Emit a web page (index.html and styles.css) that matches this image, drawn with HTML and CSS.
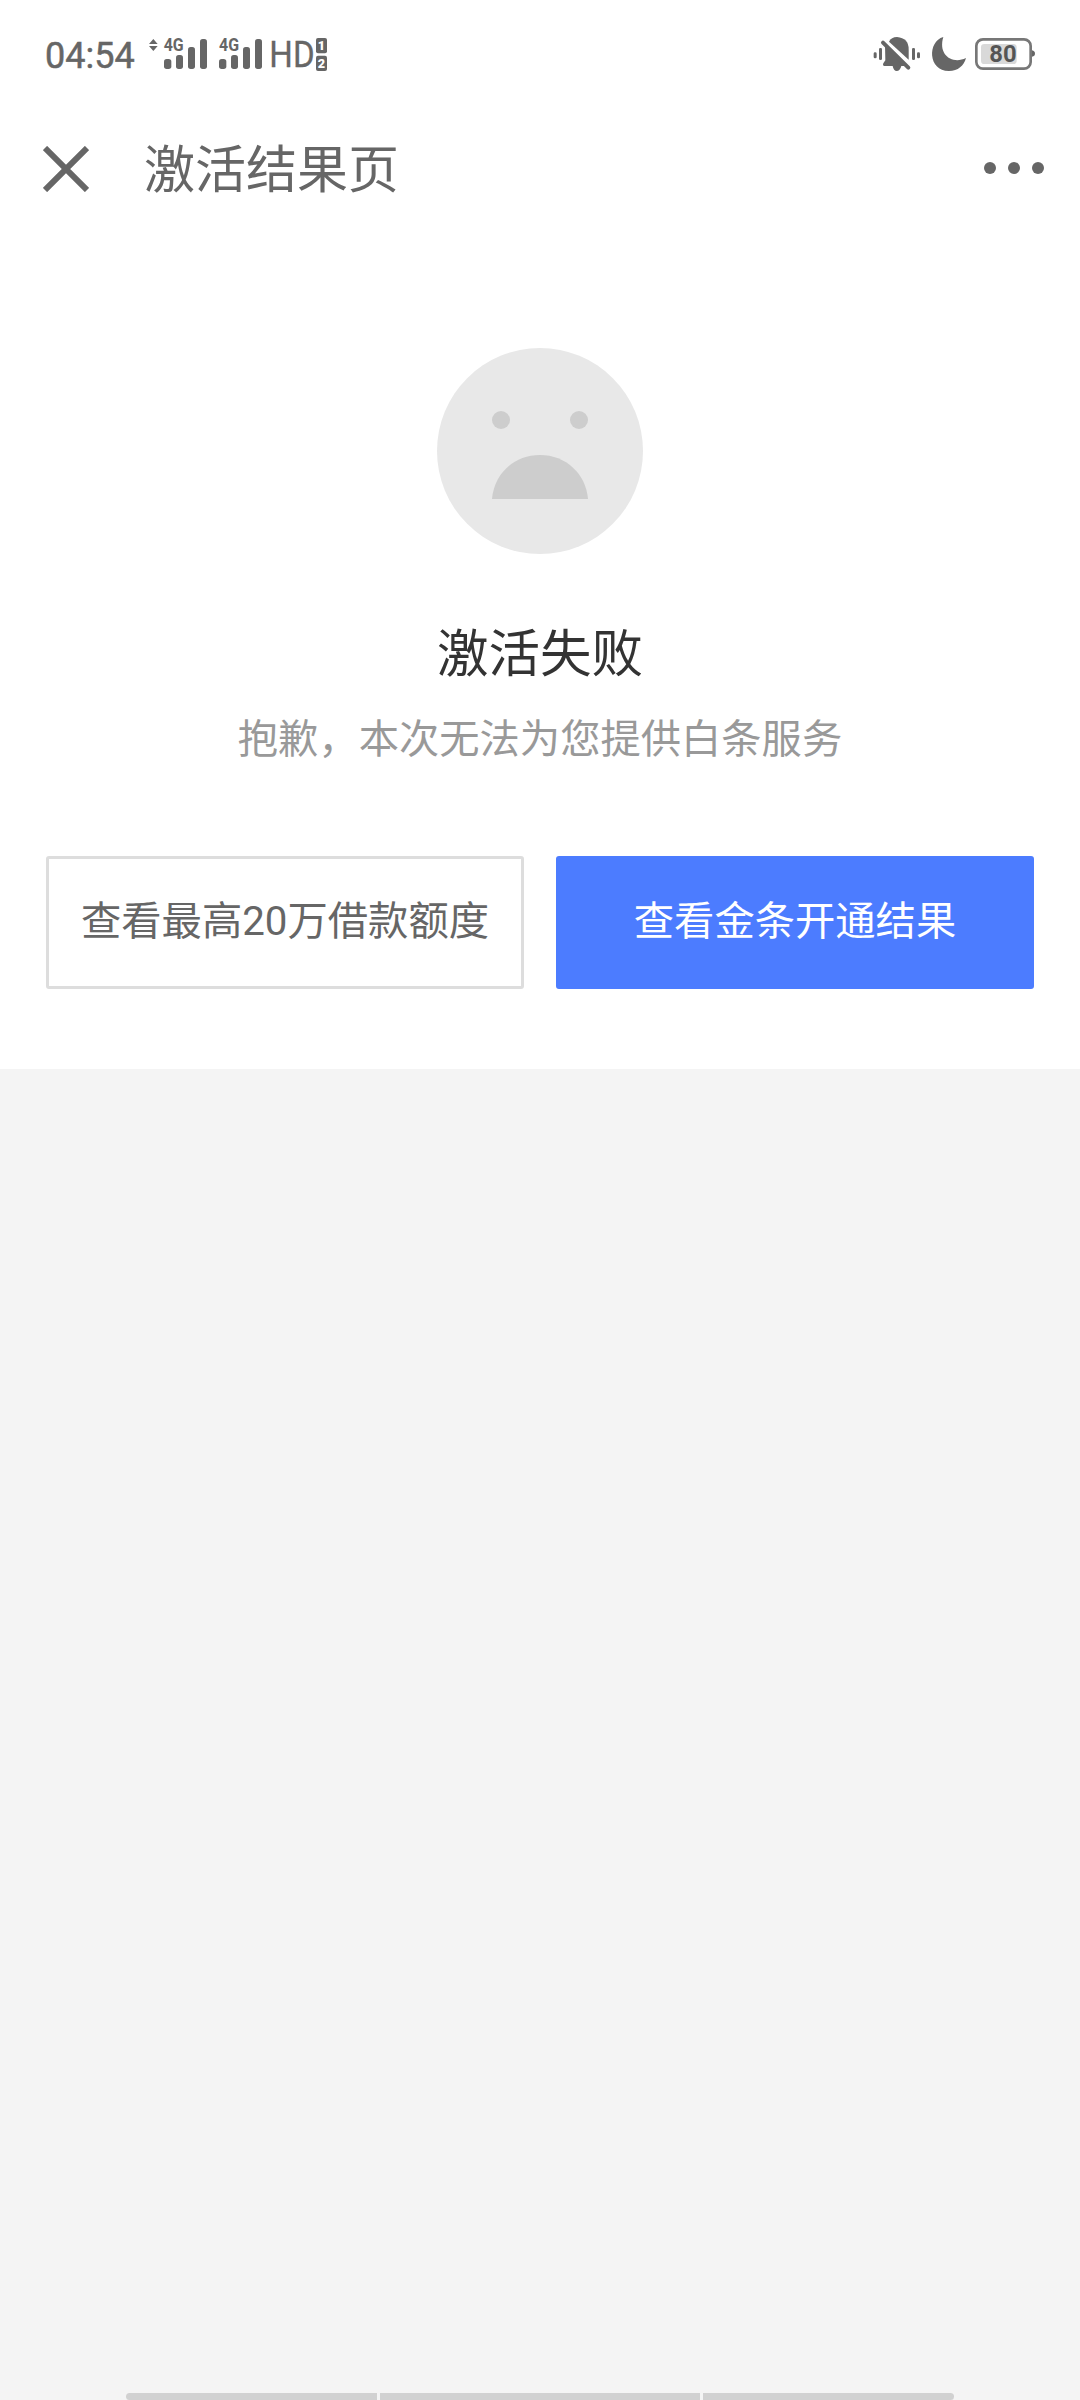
FILE: index.html
```html
<!DOCTYPE html>
<html lang="zh-CN">
<head>
<meta charset="UTF-8">
<meta name="viewport" content="width=device-width, initial-scale=1.0">
<title>激活结果页</title>
<link rel="stylesheet" href="styles.css">
</head>
<body>

<div class="status-bar">
  <span class="clock">04:54</span>
  <svg class="signals" viewBox="351 30 549 147">
    <path d="M357 72L370 57L383 72ZM357 78L370 93L383 78Z"/>
    <text class="net" x="401" y="94" textLength="60" lengthAdjust="spacingAndGlyphs">4G</text>
    <rect x="402" y="117" width="22" height="30" rx="8"/>
    <rect x="438" y="105" width="21" height="42" rx="8"/>
    <rect x="474" y="81" width="21" height="66" rx="8"/>
    <rect x="510" y="57" width="21" height="90" rx="8"/>
    <text class="net" x="567" y="94" textLength="60" lengthAdjust="spacingAndGlyphs">4G</text>
    <rect x="567" y="117" width="22" height="30" rx="8"/>
    <rect x="603" y="105" width="21" height="42" rx="8"/>
    <rect x="639" y="81" width="21" height="66" rx="8"/>
    <rect x="675" y="57" width="21" height="90" rx="8"/>
    <text class="hd" x="718" y="141" textLength="136" lengthAdjust="spacingAndGlyphs">HD</text>
    <rect x="858" y="54" width="33" height="46" rx="6"/>
    <rect x="858" y="107" width="33" height="46" rx="6"/>
    <text class="sim" x="874" y="91">1</text>
    <text class="sim" x="874" y="144">2</text>
  </svg>
  <svg class="indicators" viewBox="39 48 489 111">
    <!-- muted bell -->
    <rect x="41" y="97" width="9" height="18" rx="4"/>
    <rect x="57" y="84" width="9" height="36" rx="4"/>
    <rect x="156" y="84" width="9" height="36" rx="4"/>
    <rect x="171" y="97" width="9" height="18" rx="4"/>
    <path d="M75 74L136 138H124Q120 153 110 153Q101 153 98 138H73Q67 137 70 130L76 121Z"/>
    <path d="M87 65Q94 51 111 51Q146 54 146 88V119Z"/>
    <path class="slash" d="M69 68L145 143"/>
    <!-- moon -->
    <path d="M250 51C202 64 203 153 267 153C294 153 312 137 318 114C278 134 233 106 250 51Z"/>
    <!-- battery -->
    <rect class="cell" x="349" y="58" width="163" height="88" rx="20"/>
    <path d="M516 91Q525 93 525 101Q525 108 516 110Z"/>
    <rect class="charge" x="363" y="72" width="107" height="60" rx="10"/>
    <text class="level" x="388" y="126" textLength="82" lengthAdjust="spacingAndGlyphs">80</text>
  </svg>
</div>

<div class="title-bar">
  <svg class="close" viewBox="0 0 46 46">
    <path d="M2 2L44 44M44 2L2 44"/>
  </svg>
  <h1 class="title">激活结果页</h1>
  <div class="more">
    <span class="dot"></span>
    <span class="dot"></span>
    <span class="dot"></span>
  </div>
</div>

<div class="result">
  <svg class="face" viewBox="0 0 206 206">
    <circle class="head" cx="103" cy="103" r="103"/>
    <circle cx="64" cy="72" r="9"/>
    <circle cx="142" cy="72" r="9"/>
    <path d="M55 151C57 126 77 107 103 107C129 107 149 126 151 151Z"/>
  </svg>
  <h2 class="result-title">激活失败</h2>
  <p class="result-text">抱歉，本次无法为您提供白条服务</p>
  <div class="buttons">
    <button class="button">查看最高20万借款额度</button>
    <button class="button primary">查看金条开通结果</button>
  </div>
</div>

<div class="nav-hint">
  <span class="hint left"></span>
  <span class="hint middle"></span>
  <span class="hint right"></span>
</div>

</body>
</html>
```
FILE: styles.css
```css
* {
  box-sizing: border-box;
}
body {
  display: flex;
  flex-direction: column;
  width: 1080px;
  height: 2400px;
  margin: 0;
  overflow: hidden;
  background-color: #f4f4f4;
  font-family: Roboto, "Noto Sans CJK SC", sans-serif;
  color: #666;
}
.status-bar {
  display: flex;
  align-items: flex-start;
  height: 108px;
  padding: 30px 45px 0 45px;
  background-color: #fff;
}
.clock {
  width: 102px;
  padding-top: 7px;
  font-size: 36px;
  line-height: 38px;
  white-space: nowrap;
  -webkit-text-stroke: 0.5px #666;
}
.signals {
  width: 183px;
  height: 49px;
  fill: #666;
}
.indicators {
  width: 163px;
  height: 37px;
  margin-top: 6px;
  margin-left: auto;
  margin-right: -1px;
  fill: #666;
}
.net {
  font-size: 53px;
  font-weight: 700;
}
.hd {
  font-size: 108px;
  stroke: #666;
  stroke-width: 1;
}
.sim {
  font-size: 38px;
  font-weight: 900;
  text-anchor: middle;
  fill: #fff;
}
.slash {
  stroke: #666;
  stroke-width: 12;
  stroke-linecap: round;
}
.cell {
  fill: none;
  stroke: #777;
  stroke-width: 8;
}
.charge {
  fill: #d9d9d9;
}
.level {
  font-size: 70px;
  font-weight: 700;
  fill: #555;
}
.title-bar {
  display: flex;
  align-items: center;
  height: 120px;
  padding: 0 36px 0 43px;
  background-color: #fff;
}
.close {
  width: 46px;
  height: 46px;
  margin-top: 1px;
  fill: none;
  stroke: #666;
  stroke-width: 6;
}
.title {
  margin: 0 0 0 55px;
  padding-top: 5px;
  font-size: 51px;
  font-weight: 400;
  line-height: 76px;
}
.more {
  display: flex;
  gap: 12px;
  margin-left: auto;
}
.dot {
  width: 12px;
  height: 12px;
  border-radius: 50%;
  background-color: #666;
}
.result {
  display: flex;
  flex-direction: column;
  align-items: center;
  height: 841px;
  padding: 120px 46px 0;
  background-color: #fff;
}
.face {
  width: 206px;
  height: 206px;
  fill: #cdcdcd;
}
.head {
  fill: #e8e8e8;
}
.result-title {
  margin: 63px 0 0;
  font-size: 51.5px;
  font-weight: 400;
  line-height: 76px;
  color: #333;
}
.result-text {
  margin: 17px 0 0;
  font-size: 40.3px;
  line-height: 60px;
  color: #999;
}
.buttons {
  display: flex;
  gap: 32px;
  width: 100%;
  margin-top: 86px;
}
.button {
  flex: 1;
  height: 133px;
  padding: 0 0 11px;
  border: 3px solid #ddd;
  border-radius: 3px;
  background-color: #fff;
  font-family: inherit;
  font-size: 40.3px;
  color: #666;
  white-space: nowrap;
}
.primary {
  border-color: #4c7cff;
  background-color: #4c7cff;
  color: #fff;
}
.nav-hint {
  display: flex;
  justify-content: center;
  gap: 3px;
  margin-top: auto;
  background-color: #f4f4f4;
}
.hint {
  height: 7px;
  background-color: #d1d1d1;
}
.left {
  width: 251px;
  border-radius: 4px 0 0 4px;
}
.middle {
  width: 320px;
}
.right {
  width: 251px;
  border-radius: 0 4px 4px 0;
}
```
